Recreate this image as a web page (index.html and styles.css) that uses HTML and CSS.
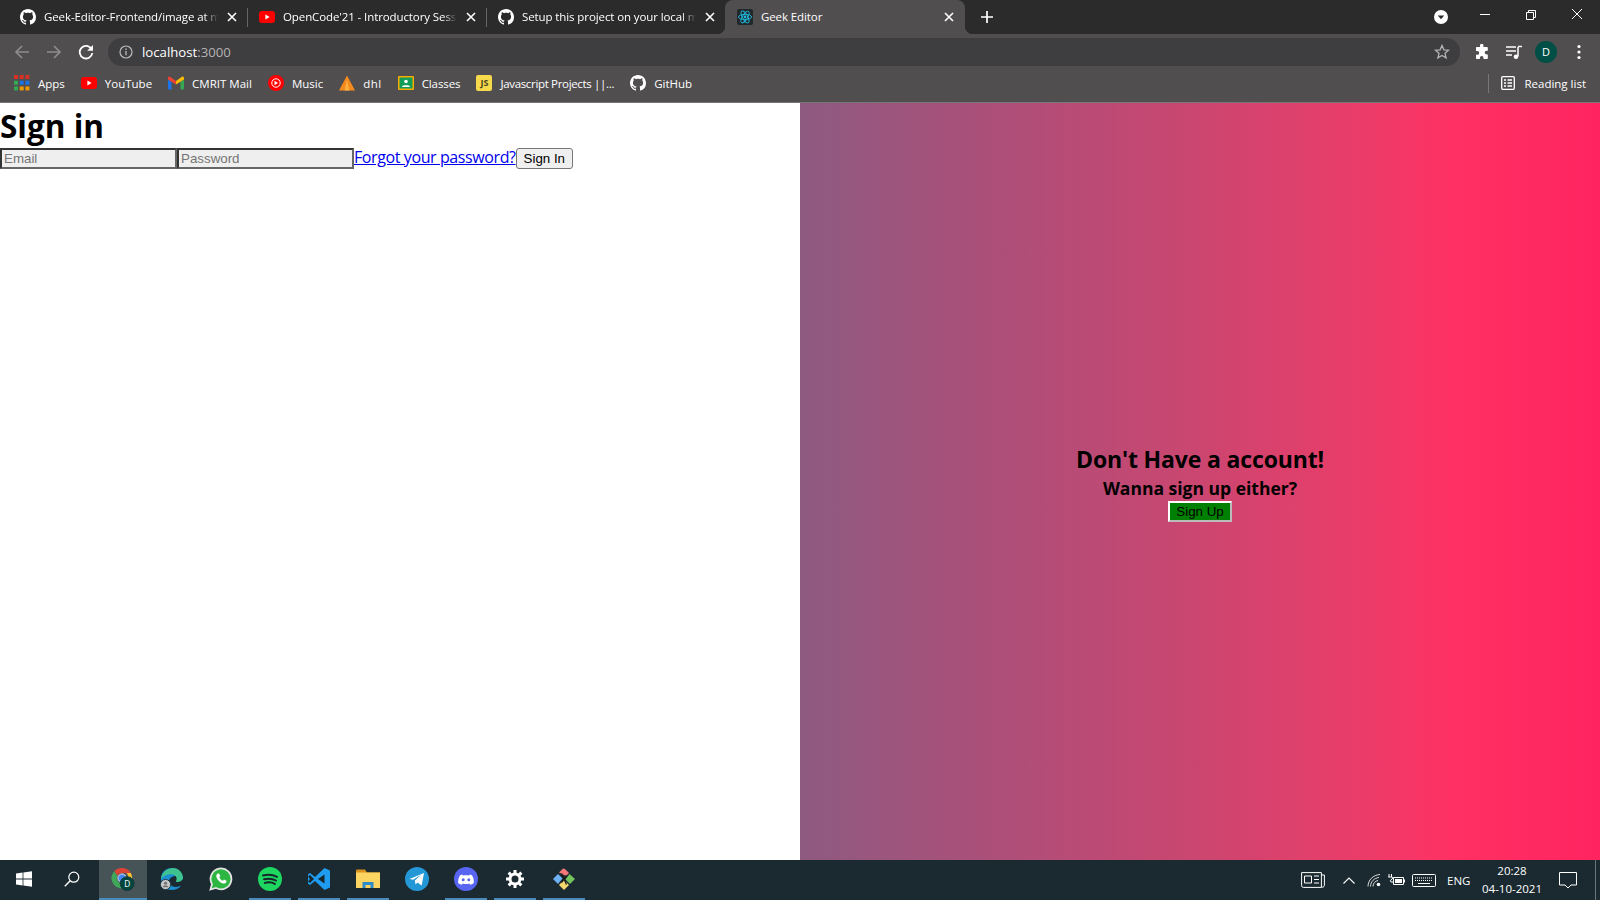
FILE: index.html

```html
<!DOCTYPE html>
<html lang="en">
<head>
  <meta charset="UTF-8" />
  <title>Geek Editor</title>
  <link rel="stylesheet" href="styles.css">
</head>
<body>
  <svg class="defs" width="0" height="0">
    <symbol id="github" viewBox="0 0 16 16">
      <path fill="#fff" d="M8 0C3.58 0 0 3.58 0 8c0 3.54 2.29 6.53 5.47 7.59.4.07.55-.17.55-.38 0-.19-.01-.82-.01-1.49-2.01.37-2.53-.49-2.69-.94-.09-.23-.48-.94-.82-1.13-.28-.15-.68-.52-.01-.53.63-.01 1.08.58 1.23.82.72 1.21 1.87.87 2.33.66.07-.52.28-.87.51-1.07-1.78-.2-3.64-.89-3.64-3.95 0-.87.31-1.59.82-2.15-.08-.2-.36-1.02.08-2.12 0 0 .67-.21 2.2.82.64-.18 1.32-.27 2-.27.68 0 1.36.09 2 .27 1.53-1.04 2.2-.82 2.2-.82.44 1.1.16 1.92.08 2.12.51.56.82 1.27.82 2.15 0 3.07-1.87 3.75-3.65 3.95.29.25.54.73.54 1.48 0 1.07-.01 1.93-.01 2.2 0 .21.15.46.55.38A8.013 8.013 0 0016 8c0-4.42-3.58-8-8-8z"/>
    </symbol>
    <symbol id="youtube" viewBox="0 0 16 12">
      <rect width="16" height="12" rx="3" fill="#f00"/>
      <path fill="#fff" d="M6.400 3.500v5L10.600 6z"/>
    </symbol>
    <symbol id="close" viewBox="0 0 10 10">
      <path d="M1 1l8 8M9 1L1 9" stroke="#fff" stroke-width="1.600" fill="none"/>
    </symbol>
  </svg>

  <div class="tabstrip">
    <div class="tab">
      <svg class="fav"><use href="#github"/></svg>
      <span class="tab-title">Geek-Editor-Frontend/image at main</span>
      <svg class="tab-x"><use href="#close"/></svg>
    </div>
    <div class="tab">
      <svg class="fav fav-yt"><use href="#youtube"/></svg>
      <span class="tab-title">OpenCode'21 - Introductory Session</span>
      <svg class="tab-x"><use href="#close"/></svg>
    </div>
    <div class="tab tab-last">
      <svg class="fav"><use href="#github"/></svg>
      <span class="tab-title">Setup this project on your local machine</span>
      <svg class="tab-x"><use href="#close"/></svg>
    </div>
    <div class="tab tab-active">
      <svg class="fav" viewBox="0 0 16 16">
        <rect width="16" height="16" rx="2" fill="#20282c"/>
        <g fill="none" stroke="#1fb6d8" stroke-width=".9">
          <ellipse cx="8" cy="8" rx="6.600" ry="2.600"/>
          <ellipse cx="8" cy="8" rx="6.600" ry="2.600" transform="rotate(60 8 8)"/>
          <ellipse cx="8" cy="8" rx="6.600" ry="2.600" transform="rotate(120 8 8)"/>
        </g>
        <circle cx="8" cy="8" r="1.400" fill="#1fb6d8"/>
      </svg>
      <span class="tab-title">Geek Editor</span>
      <svg class="tab-x"><use href="#close"/></svg>
    </div>
    <svg class="new-tab" viewBox="0 0 12 12"><path d="M6 0v12M0 6h12" stroke="#fff" stroke-width="1.700"/></svg>
    <div class="strip-right">
      <svg class="tab-search" viewBox="0 0 16 16"><circle cx="8" cy="8" r="7" fill="#fff"/><path d="M4.800 6.400h6.400L8 10.200z" fill="#2b2b2b"/></svg>
      <svg class="win-btn" viewBox="0 0 46 30"><path d="M18 14.500h10" stroke="#fff"/></svg>
      <svg class="win-btn" viewBox="0 0 46 30"><path d="M18.500 12.500h7v7h-7zM20.500 12.500v-2h7v7h-2" stroke="#fff" fill="none"/></svg>
      <svg class="win-btn" viewBox="0 0 46 30"><path d="M18 9l10 10M28 9L18 19" stroke="#fff" fill="none"/></svg>
    </div>
  </div>

  <div class="toolbar">
    <svg class="nav-btn" viewBox="0 0 16 16"><path d="M15 8H2M8 2L2 8l6 6" stroke="#8d8c8d" stroke-width="1.700" fill="none"/></svg>
    <svg class="nav-btn" viewBox="0 0 16 16"><path d="M1 8h13M8 2l6 6-6 6" stroke="#8d8c8d" stroke-width="1.700" fill="none"/></svg>
    <svg class="nav-btn" viewBox="0 0 16 16"><path d="M13.600 5.200A6.300 6.300 0 1 0 14.300 9" stroke="#fff" stroke-width="1.800" fill="none"/><path d="M15 1v5.800H9.200z" fill="#fff"/></svg>
    <div class="omnibox">
      <svg class="info" viewBox="0 0 14 14"><circle cx="7" cy="7" r="6" stroke="#bdbcbd" stroke-width="1.200" fill="none"/><path d="M7 6v4.200M7 3.500v1.400" stroke="#bdbcbd" stroke-width="1.300"/></svg>
      <span class="url">localhost<span class="url-port">:3000</span></span>
      <svg class="star" viewBox="0 0 16 16"><path d="M8 1.500l1.900 4.300 4.700.4-3.600 3.100 1.100 4.600L8 11.500l-4.100 2.400L5 9.300 1.400 6.200l4.700-.4z" stroke="#b5b4b5" stroke-width="1.300" fill="none"/></svg>
    </div>
    <svg class="tool-icon" viewBox="0 0 16 16"><path fill="#fff" d="M6 1.500a1.700 1.700 0 0 1 3.400 0V3H13a.8.800 0 0 1 .8.800v3h-1.300a1.800 1.800 0 0 0 0 3.600h1.300v3.800a.8.800 0 0 1-.8.800H9.500v-1.200a1.800 1.800 0 0 0-3.600 0V15H2.800a.8.800 0 0 1-.8-.8v-3.400h1.300a1.900 1.900 0 0 0 0-3.800H2V3.800a.8.800 0 0 1 .8-.8H6z"/></svg>
    <svg class="tool-icon" viewBox="0 0 16 16"><path d="M0 3h10M0 7h10M0 11h6" stroke="#fff" stroke-width="1.300"/><path d="M12 3v9.500" stroke="#fff" stroke-width="1.500"/><path d="M12 2.500h4" stroke="#fff" stroke-width="1.500"/><circle cx="10" cy="12.700" r="2.300" fill="#fff"/></svg>
    <div class="avatar">D</div>
    <svg class="tool-icon menu-dots" viewBox="0 0 4 16"><circle cx="2" cy="2.500" r="1.600" fill="#fff"/><circle cx="2" cy="8" r="1.600" fill="#fff"/><circle cx="2" cy="13.500" r="1.600" fill="#fff"/></svg>
  </div>

  <div class="bookmarks">
    <div class="bm">
      <svg class="bm-icon" viewBox="0 0 14 14">
        <g fill="#d93025"><rect width="3.500" height="3.500"/><rect x="5" width="3.500" height="3.500"/><rect x="10" width="3.500" height="3.500"/></g>
        <g fill="#34a853"><rect y="5" width="3.500" height="3.500"/><rect y="10" width="3.500" height="3.500"/></g>
        <g fill="#1a73e8"><rect x="5" y="5" width="3.500" height="3.500"/><rect x="10" y="5" width="3.500" height="3.500"/></g>
        <g fill="#f29900"><rect x="5" y="10" width="3.500" height="3.500"/><rect x="10" y="10" width="3.500" height="3.500"/></g>
      </svg>
      <span>Apps</span>
    </div>
    <div class="bm">
      <svg class="bm-icon bm-yt"><use href="#youtube"/></svg>
      <span>YouTube</span>
    </div>
    <div class="bm">
      <svg class="bm-icon" viewBox="0 0 16 13">
        <path d="M0 3v9a1 1 0 0 0 1 1h2.500V5.500z" fill="#1a73e8"/>
        <path d="M12.500 5.500V13H15a1 1 0 0 0 1-1V3z" fill="#34a853"/>
        <path d="M0 1.500C0 .2 1.400-.4 2.400.4L8 4.600 8 8 0 3z" fill="#ea4335"/>
        <path d="M16 1.500C16 .2 14.600-.4 13.600.4L8 4.600 8 8l8-5z" fill="#fbbc04"/>
      </svg>
      <span>CMRIT Mail</span>
    </div>
    <div class="bm">
      <svg class="bm-icon" viewBox="0 0 16 16">
        <circle cx="8" cy="8" r="8" fill="#f00"/>
        <circle cx="8" cy="8" r="4.200" fill="none" stroke="#fff" stroke-width="1"/>
        <path d="M6.500 5.800v4.400L10 8z" fill="#fff"/>
      </svg>
      <span>Music</span>
    </div>
    <div class="bm">
      <svg class="bm-icon" viewBox="0 0 16 16">
        <path d="M8 .500L16 15.500H0z" fill="#f58a1f"/>
        <path d="M8 5l2.500 10.500h-5z" fill="#fbb040"/>
      </svg>
      <span class="bm-wide">dhl</span>
    </div>
    <div class="bm">
      <svg class="bm-icon" viewBox="0 0 16 16">
        <rect y="1" width="16" height="14" rx="1" fill="#f9ab00"/>
        <rect x="1.500" y="2.500" width="13" height="11" fill="#0f9d58"/>
        <circle cx="8" cy="6.500" r="1.800" fill="#fff"/>
        <path d="M4 11.500c0-1.800 8-1.800 8 0v.5H4z" fill="#fff"/>
      </svg>
      <span class="bm-narrow">Classes</span>
    </div>
    <div class="bm">
      <div class="js-icon">JS</div>
      <span class="bm-tight">Javascript Projects ||...</span>
    </div>
    <div class="bm">
      <svg class="bm-icon"><use href="#github"/></svg>
      <span>GitHub</span>
    </div>
    <div class="reading">
      <svg class="reading-icon" viewBox="0 0 14 14"><rect x=".7" y=".7" width="12.600" height="12.600" rx="1" stroke="#fff" stroke-width="1.300" fill="none"/><path d="M3 4h2M6.500 4H11M3 7h2M6.500 7H11M3 10h2M6.500 10H11" stroke="#fff" stroke-width="1.300"/></svg>
      <span>Reading list</span>
    </div>
  </div>

  <div class="page">
    <div class="signin">
      <h1>Sign in</h1>
      <form class="signin-form">
        <input type="email" placeholder="Email">
        <input type="password" placeholder="Password">
        <a href="#">Forgot your password?</a>
        <button type="button">Sign In</button>
      </form>
    </div>
    <div class="signup">
      <h2>Don't Have a account!</h2>
      <h3>Wanna sign up either?</h3>
      <button type="button" class="signup-btn">Sign Up</button>
    </div>
  </div>

  <div class="taskbar">
    <div class="task task-start">
      <svg class="task-icon" viewBox="0 0 16 16"><path fill="#fff" d="M0 2.400l6.600-.9v6.100H0zM7.400 1.400L16 .2v7.400H7.400zM0 8.400h6.600v6.100L0 13.600zM7.400 8.400H16v7.400l-8.600-1.200z"/></svg>
    </div>
    <div class="task task-start task-search">
      <svg class="task-icon" viewBox="0 0 16 16"><circle cx="9.800" cy="6.200" r="5" stroke="#fff" stroke-width="1.200" fill="none"/><path d="M6.200 9.800L.8 15.200" stroke="#fff" stroke-width="1.400"/></svg>
    </div>
    <div class="task task-active">
      <svg class="task-icon task-big" viewBox="0 0 26 26">
        <path d="M12 1a11 11 0 0 1 9.500 5.500H12a5.500 5.500 0 0 0-5 3L3.500 4.500A11 11 0 0 1 12 1z" fill="#db4437"/>
        <path d="M21.500 6.500A11 11 0 0 1 12 23l4.700-8.200a5.500 5.500 0 0 0 0-8.300z" fill="#fbc02d"/>
        <path d="M3.500 4.500A11 11 0 0 0 12 23l4.700-8.200A5.500 5.500 0 0 1 7 9.500z" fill="#3fa757"/>
        <circle cx="12" cy="12" r="4.500" fill="#4285f4" stroke="#e8e8e8" stroke-width="1"/>
        <circle cx="17.500" cy="18" r="7.500" fill="#00483f" stroke="#17343a" stroke-width="1"/>
        <text x="17.500" y="21.500" class="badge-text">D</text>
      </svg>
    </div>
    <div class="task">
      <svg class="task-icon task-big" viewBox="0 0 26 26">
        <path d="M25 14C25 6 19 1 13 1 6 1 1 6 1 13c0 7 5 12 12 12 4 0 8-2 10-5-3 2-11 3-13-3-1-3 1-6 5-7 4-1 8 1 10 4z" fill="#1b8fd1"/>
        <path d="M1 13C2 5 9 1 14 1c6 0 11 5 11 11-1 4-5 5-8 4 2-3 1-7-3-8-5-1-10 1-13 5z" fill="#3ec28f"/>
        <circle cx="6" cy="19" r="5.500" fill="#c8c8c8" stroke="#17343a"/>
        <circle cx="6" cy="17.500" r="1.800" fill="#777"/>
        <path d="M2.800 22c0-3 6.400-3 6.400 0z" fill="#777"/>
      </svg>
    </div>
    <div class="task">
      <svg class="task-icon task-big" viewBox="0 0 24 24">
        <path d="M1.500 22.500l1.500-5.400A10.400 10.400 0 1 1 7 21z" fill="#2db742" stroke="#e4e4e4" stroke-width="1.800"/>
        <path d="M8.500 6.800c-1 .6-1.500 2-1 3.400 1 2.800 3.500 5.300 6.200 6.200 1.500.5 3 0 3.600-1.200l.2-1.500-2.500-1.200-1.100 1.300c-1.500-.5-3-2-3.600-3.500l1-1.100-1.200-2.600z" fill="#fff"/>
      </svg>
    </div>
    <div class="task task-open">
      <svg class="task-icon task-big" viewBox="0 0 24 24">
        <circle cx="12" cy="12" r="12" fill="#1ed760"/>
        <path d="M5 8.500c4.500-1.300 9.800-1 14 1.300M6 12.300c3.800-1 8.500-.8 12 1.200M6.800 15.900c3.200-.8 7.200-.7 10 1" stroke="#17262b" stroke-width="2" stroke-linecap="round" fill="none"/>
      </svg>
    </div>
    <div class="task task-open">
      <svg class="task-icon task-big" viewBox="0 0 24 24">
        <path d="M17.500 1L23 3.500v17L17.500 23 8 14l-5 4-2-1.300V7.300L3 6l5 4z" fill="#1f9cf0"/>
        <path d="M17.500 7.500L11 12l6.500 4.500z" fill="#17262b"/>
        <path d="M1 9.500L3 8l4 4-4 4-2-1.500L3 12z" fill="#17262b"/>
      </svg>
    </div>
    <div class="task task-open">
      <svg class="task-icon task-big" viewBox="0 0 24 24">
        <path d="M0 3.500A1 1 0 0 1 1 2.500h8l2 3H24v2H0z" fill="#d9921a"/>
        <rect y="5.500" width="24" height="15.500" fill="#fcd462"/>
        <path d="M6.500 21v-6h11v6h-3v-3h-5v3z" fill="#2d8bc9"/>
      </svg>
    </div>
    <div class="task">
      <svg class="task-icon task-big" viewBox="0 0 24 24">
        <circle cx="12" cy="12" r="12" fill="#2497d6"/>
        <path d="M4.500 12L19 6l-2.300 12.500-4.200-3-2 2-.6-4 6.500-6-8.200 5.200z" fill="#fff"/>
      </svg>
    </div>
    <div class="task task-open">
      <svg class="task-icon task-big" viewBox="0 0 24 24">
        <circle cx="12" cy="12" r="12" fill="#5865f2"/>
        <path d="M8.200 7.500C6.800 7.800 6 8.300 6 8.300 4.500 10.800 4 13.500 4.200 16c1.300 1 2.700 1.500 3.700 1.700l.8-1.300c1 .4 2.100.6 3.300.6s2.300-.2 3.300-.6l.8 1.300c1-.2 2.400-.7 3.700-1.700.2-2.500-.3-5.200-1.800-7.700 0 0-.8-.5-2.200-.8l-.5 1c-2.200-.4-4.400-.4-6.600 0z" fill="#fff"/>
        <circle cx="9.200" cy="12.800" r="1.500" fill="#5865f2"/>
        <circle cx="14.800" cy="12.800" r="1.500" fill="#5865f2"/>
      </svg>
    </div>
    <div class="task task-open">
      <svg class="task-icon gear" viewBox="0 0 18 18">
        <circle cx="9" cy="9" r="5" fill="none" stroke="#fff" stroke-width="3"/>
        <path d="M9 0v18M0 9h18M2.600 2.600l12.800 12.800M15.400 2.600L2.600 15.400" stroke="#fff" stroke-width="3" stroke-dasharray="3.200 11.600"/>
      </svg>
    </div>
    <div class="task task-open">
      <svg class="task-icon task-big" viewBox="0 0 24 24">
        <path d="M7 5.500l4-4 2 .5 4 4-3 3z" fill="#f2777a"/>
        <path d="M1 12l5-5 4.500 4.500L6 17z" fill="#6fb1f5"/>
        <path d="M17.500 7l5.500 5-5 5-4.500-4.500z" fill="#74c25c"/>
        <path d="M7 18l5-5 5 5-5 5z" fill="#f5d76e"/>
        <path d="M9.500 6.500l5 11M14.500 8.500l-5 7" stroke="#1a1a1a" stroke-width="1.300"/>
      </svg>
    </div>

    <div class="tray">
      <svg class="tray-news" viewBox="0 0 24 16"><path d="M.6.600h19.800v14.800H2.500A1.900 1.900 0 0 1 .6 13.500zM20.400 3h3v10.500a1.900 1.900 0 0 1-3 1.300" stroke="#fff" fill="none"/><path d="M3.500 4h7v7h-7zM13 4h5M13 7.500h5M13 11h5" stroke="#fff" fill="none"/></svg>
      <svg class="tray-chevron" viewBox="0 0 12 7"><path d="M.5 6.500L6 1l5.500 5.500" stroke="#fff" stroke-width="1.100" fill="none"/></svg>
      <svg class="tray-wifi" viewBox="0 0 14 14"><path d="M1 13.500C1 7 6 2 13 1.500M3.500 13.500C3.500 8.500 7.500 5 12 4.500M6 13.500c0-3.500 2.500-5.500 5-6" stroke="#d8dadb" fill="none"/><circle cx="11.500" cy="11.500" r="1.800" fill="#fff"/></svg>
      <svg class="tray-battery" viewBox="0 0 17 12"><path d="M5.500 3.500h10v7h-10z" stroke="#fff" fill="none"/><path d="M7 5h7v4H7zM16 5.500h1v3h-1z" fill="#fff"/><path d="M1 0v3M3.500 0v3M.2 3h4.100v2L2.300 6.500 3 8h2" stroke="#fff" fill="none"/></svg>
      <svg class="tray-keyboard" viewBox="0 0 24 13"><rect x=".5" y=".5" width="23" height="12" rx="1" stroke="#fff" fill="none"/><path d="M3 4h18M3 6.500h18" stroke="#fff" stroke-dasharray="1 1"/><path d="M6 9.500h12" stroke="#fff"/></svg>
      <span class="tray-lang">ENG</span>
      <div class="tray-clock">
        <span>20:28</span>
        <span>04-10-2021</span>
      </div>
      <svg class="tray-notify" viewBox="0 0 18 17"><path d="M.5.500h17v12.500h-5.500L9 16 6 13H.5z" stroke="#fff" fill="none"/></svg>
      <div class="show-desktop"></div>
    </div>
  </div>
</body>
</html>
```

FILE: styles.css

```css
* {
  box-sizing: border-box;
}
html, body {
  margin: 0;
  height: 100%;
  overflow: hidden;
}
body {
  display: flex;
  flex-direction: column;
  width: 1600px;
  height: 900px;
  font-family: "Open Sans", "Noto Sans", sans-serif;
}
.defs {
  position: absolute;
}

/* tab strip */
.tabstrip {
  display: flex;
  align-items: center;
  height: 34px;
  padding-left: 9px;
  background: #2b2b2c;
}
.tab {
  display: flex;
  align-items: center;
  width: 239px;
  height: 34px;
  padding: 0 8px 0 11px;
  color: #fff;
  font-size: 11.5px;
  letter-spacing: -0.1px;
  background-image: linear-gradient(#666, #666);
  background-size: 1px 19px;
  background-position: right 8px;
  background-repeat: no-repeat;
}
.tab-last {
  background-image: none;
}
.tab-active {
  position: relative;
  width: 240px;
  margin-left: -1px;
  padding-left: 12px;
  border-radius: 8px 8px 0 0;
  background: #504e4f;
}
.tab-active::before,
.tab-active::after {
  content: "";
  position: absolute;
  bottom: 0;
  width: 8px;
  height: 8px;
}
.tab-active::before {
  left: -8px;
  background: radial-gradient(circle at 0 0, transparent 8px, #504e4f 8.500px);
}
.tab-active::after {
  right: -8px;
  background: radial-gradient(circle at 100% 0, transparent 8px, #504e4f 8.500px);
}
.fav {
  flex: none;
  width: 16px;
  height: 16px;
  margin-right: 8px;
}
.fav-yt {
  height: 12px;
}
.tab-title {
  flex: 1;
  margin-top: -2px;
  overflow: hidden;
  white-space: nowrap;
  -webkit-mask-image: linear-gradient(to right, #000 92%, transparent);
  mask-image: linear-gradient(to right, #000 92%, transparent);
}
.tab-active .tab-title {
  -webkit-mask-image: none;
  mask-image: none;
}
.tab-x {
  flex: none;
  width: 10px;
  height: 10px;
  margin: 0 3px 0 9px;
}
.new-tab {
  width: 12px;
  height: 12px;
  margin-left: 16px;
}
.strip-right {
  display: flex;
  align-items: center;
  margin-left: auto;
  height: 34px;
}
.tab-search {
  width: 16px;
  height: 16px;
  margin-right: 13px;
}
.win-btn {
  width: 46px;
  height: 30px;
  align-self: flex-start;
}

/* toolbar */
.toolbar {
  display: flex;
  align-items: center;
  height: 36px;
  padding-left: 14px;
  background: #504e4f;
}
.nav-btn {
  width: 16px;
  height: 16px;
  margin-right: 16px;
}
.omnibox {
  display: flex;
  align-items: center;
  width: 1352px;
  height: 28px;
  margin: 0 -2px 0 -2px;
  padding: 0 10px 0 11px;
  border-radius: 14px;
  background: #3e3d3f;
  color: #fff;
  font-size: 13.2px;
}
.url {
  margin: -1px 0 0 -1px;
}
.info {
  width: 14px;
  height: 14px;
  margin-right: 10px;
}
.url-port {
  color: #b4b3b4;
}
.star {
  width: 16px;
  height: 16px;
  margin-left: auto;
}
.tool-icon {
  width: 16px;
  height: 16px;
  margin-left: 16px;
}
.avatar {
  width: 22px;
  height: 22px;
  margin-left: 13px;
  border-radius: 50%;
  background: #004f46;
  color: #fff;
  font-size: 11px;
  line-height: 22px;
  text-align: center;
}
.menu-dots {
  width: 4px;
  margin-left: 20px;
}

/* bookmarks bar */
.bookmarks {
  display: flex;
  align-items: center;
  height: 33px;
  padding: 0 0 6px 14px;
  border-bottom: 1px solid #787778;
  background: #504e4f;
  color: #fff;
  font-size: 11.5px;
}
.bm {
  display: flex;
  align-items: center;
  margin-right: 16px;
}
.bm-icon {
  flex: none;
  width: 16px;
  height: 16px;
  margin-right: 8px;
}
.bm-yt {
  height: 12px;
}
.bm-wide {
  letter-spacing: 0.5px;
}
.bm-narrow {
  letter-spacing: -0.1px;
}
.bm-tight {
  letter-spacing: -0.33px;
}
.js-icon {
  width: 16px;
  height: 16px;
  margin-right: 8px;
  border-radius: 2px;
  background: #f7d94c;
  color: #4a4420;
  font-size: 9px;
  font-weight: 700;
  line-height: 16px;
  text-align: center;
}
.reading {
  display: flex;
  align-items: center;
  height: 19px;
  margin-left: auto;
  padding: 0 14px 0 12px;
  border-left: 1px solid #777;
}
.reading-icon {
  width: 14px;
  height: 14px;
  margin-right: 9px;
}

/* page */
.page {
  display: flex;
  flex: 1;
  min-height: 0;
}
.signin {
  width: 800px;
  background: #fff;
}
.signin h1 {
  margin: 0;
  font-size: 31.5px;
  line-height: 45px;
  font-weight: 700;
}
.signin-form {
  display: flex;
  align-items: center;
  height: 21px;
}
.signin-form input {
  width: 177px;
  height: 21px;
  padding: 1px 2px;
  border: 2px solid;
  border-color: #333 #666 #666 #333;
  background: #efefef;
  font-family: "Liberation Sans", sans-serif;
  font-size: 13.33px;
}
.signin-form a {
  margin-top: -4px;
  color: #00e;
  font-size: 16px;
  letter-spacing: -0.4px;
}
.signin-form button {
  height: 21px;
  padding: 1px 7px;
  border: 1px solid #767676;
  border-radius: 3px;
  background: #efefef;
  font-family: "Liberation Sans", sans-serif;
  font-size: 13.33px;
}
.signup {
  display: flex;
  flex-direction: column;
  align-items: center;
  justify-content: center;
  width: 800px;
  padding-top: 2px;
  background: linear-gradient(to right, #8e5a80 0%, #ad4f79 25%, #cb4670 50%, #ea3c69 70%, #ff3063 82%, #ff2460 100%);
  color: #000;
}
.signup h2 {
  margin: 0;
  font-size: 23px;
  line-height: 32px;
  letter-spacing: -0.15px;
}
.signup h3 {
  margin: 0;
  font-size: 17.5px;
  line-height: 26px;
}
.signup-btn {
  height: 21px;
  padding: 0 6px;
  border: 2px solid;
  border-color: #fff #bbb #bbb #fff;
  background: #008000;
  font-family: "Liberation Sans", sans-serif;
  font-size: 13.33px;
  color: #000;
}

/* taskbar */
.taskbar {
  display: flex;
  align-items: center;
  flex: none;
  height: 40px;
  background: #1a2a30;
}
.task {
  display: flex;
  align-items: center;
  justify-content: center;
  width: 49px;
  height: 40px;
  border-bottom: 2px solid transparent;
}
.task-start {
  width: 48px;
}
.task-search {
  margin-right: 3px;
}
.task-active {
  width: 48px;
  background: #465458;
  border-bottom-color: #4a8bbd;
}
.task-open {
  border-image: linear-gradient(to right, transparent 5px, #4a8bbd 5px, #4a8bbd 45px, transparent 45px) 1;
}
.task-icon {
  width: 16px;
  height: 16px;
}
.task-big {
  width: 24px;
  height: 24px;
}
.gear {
  width: 18px;
  height: 18px;
}
.badge-text {
  fill: #fff;
  font-size: 9px;
  text-anchor: middle;
}
.tray {
  display: flex;
  align-items: center;
  margin-left: auto;
  height: 40px;
  color: #fff;
  font-size: 11.5px;
}
.tray-news {
  width: 24px;
  height: 16px;
  margin-right: 18px;
}
.tray-chevron {
  width: 12px;
  height: 7px;
  margin-right: 12px;
}
.tray-wifi {
  width: 14px;
  height: 14px;
  margin-right: 7px;
}
.tray-battery {
  width: 17px;
  height: 12px;
  margin-right: 7px;
}
.tray-keyboard {
  width: 24px;
  height: 13px;
  margin-right: 11px;
}
.tray-lang {
  width: 26px;
}
.tray-clock {
  display: flex;
  flex-direction: column;
  align-items: center;
  width: 60px;
  margin: 0 17px 0 9px;
  line-height: 18px;
}
.tray-notify {
  width: 18px;
  height: 17px;
  margin-right: 18px;
}
.show-desktop {
  width: 1px;
  height: 40px;
  margin-right: 4px;
  background: #6a7579;
}
```
